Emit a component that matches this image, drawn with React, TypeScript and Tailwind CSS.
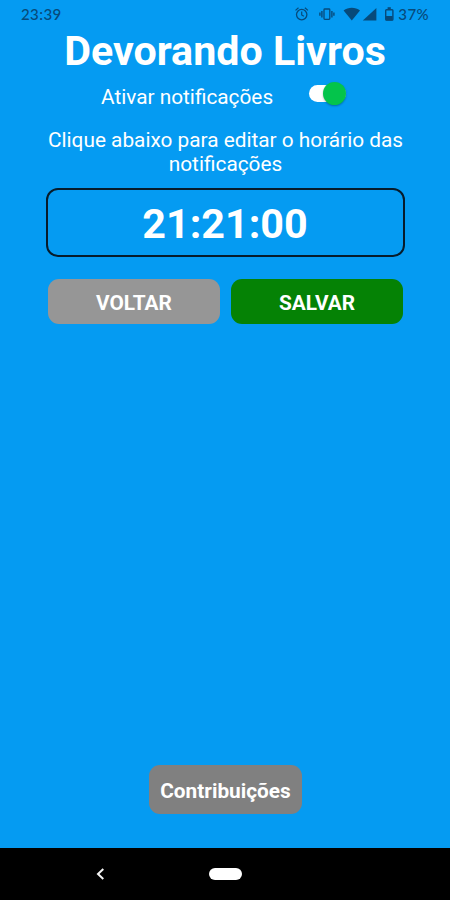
import React from "react";

function StatusBar() {
  return (
    <header className="flex h-[30px] items-start justify-between pl-[21px] pr-[21px] text-[#074a7a]">
      <span className="mt-[4px] font-[Lato,sans-serif] text-[15px] leading-[20px] font-medium tracking-[0.4px]">23:39</span>
      <svg className="ml-auto mr-[3px] mt-[4px]" width="101" height="20" viewBox="294 4 101 20" fill="none" stroke="currentColor">
        <circle cx="301.7" cy="14.6" r="5.2" strokeWidth="1.3" />
        <path d="M301.7 11.5v3.4l2.2 1.4M295.5 10.4l3-2.6M307.9 10.4l-3-2.6" strokeWidth="1.2" />
        <rect x="324" y="9" width="5.8" height="10.4" rx="0.8" strokeWidth="1.3" />
        <path d="M321.9 11v6.4M331.9 11v6.4M319.9 12.6v3.2M333.9 12.6v3.2" strokeWidth="1.4" />
        <path d="M343.6 10.4c4.6-3.4 11.8-3.4 16.4 0l-8.2 10.2z" fill="currentColor" stroke="none" />
        <path d="M376.4 8v12.4H362.8z" fill="currentColor" stroke="none" />
        <path d="M387.6 8.2h3.2" strokeWidth="2" />
        <rect x="385.7" y="9.7" width="7.2" height="10.4" rx="0.8" strokeWidth="1.4" />
        <path d="M386 16h6.6v4.4H386z" fill="currentColor" stroke="none" />
      </svg>
      <span className="mt-[4px] font-[Lato,sans-serif] text-[15px] leading-[20px] font-medium tracking-[0.4px]">37%</span>
    </header>
  );
}

function Toggle() {
  return (
    <button role="switch" aria-checked="true" aria-label="Ativar notificações" className="-mt-[7px] flex h-[24px] w-[38px] items-center">
      <span className="flex h-[17px] w-[37px] items-center justify-end rounded-full bg-white">
        <span className="size-[23px] shrink-0 rounded-full bg-[#04c44b] shadow-[0_1px_2px_rgba(0,0,0,0.3)]" />
      </span>
    </button>
  );
}

export default function App() {
  return (
    <div className="flex h-[900px] w-[450px] flex-col overflow-hidden bg-[#059bf2] font-[Roboto,sans-serif] text-white">
      <StatusBar />
      <main className="flex flex-1 flex-col items-center">
        <h1 className="h-[44px] text-[41.2px] leading-[42px] font-bold whitespace-nowrap">Devorando Livros</h1>
        <div className="mt-[7px] flex h-[32px] w-full items-center pl-[101px]">
          <span className="w-[208px] text-[20.8px] leading-[24px] whitespace-nowrap">Ativar notificações</span>
          <Toggle />
        </div>
        <p className="mt-[16px] ml-[1px] h-[47px] text-center text-[20.8px] leading-[23.5px] whitespace-nowrap">
          Clique abaixo para editar o horário das
          <br />
          notificações
        </p>
        <div className="mt-[12px] flex h-[69px] w-[359px] items-center justify-center rounded-[12px] border-2 border-[#071c2b] pt-[3px] text-[41.3px] leading-[48px] font-bold">
          21:21:00
        </div>
        <div className="mt-[22px] ml-[1px] flex gap-[11px] text-[20.8px] leading-[24px] font-bold">
          <button className="h-[45px] w-[172px] rounded-[11px] bg-[#969696] pt-[2px]">VOLTAR</button>
          <button className="h-[45px] w-[172px] rounded-[11px] bg-[#058205] pt-[2px]">SALVAR</button>
        </div>
        <button className="mt-auto mb-[34px] ml-[1px] h-[49px] w-[153px] rounded-[11px] bg-[#808080] pt-[2px] text-[20.8px] leading-[24px] font-bold">
          Contribuições
        </button>
      </main>
      <nav className="flex h-[52px] items-center bg-black pl-[96px]">
        <svg width="9" height="12" viewBox="0 0 9 12" fill="none" stroke="#f5f5f5" strokeWidth="2">
          <path d="M7.3 1L2 6l5.3 5" />
        </svg>
        <span className="ml-[104px] h-[12px] w-[33px] rounded-full bg-white" />
      </nav>
    </div>
  );
}
